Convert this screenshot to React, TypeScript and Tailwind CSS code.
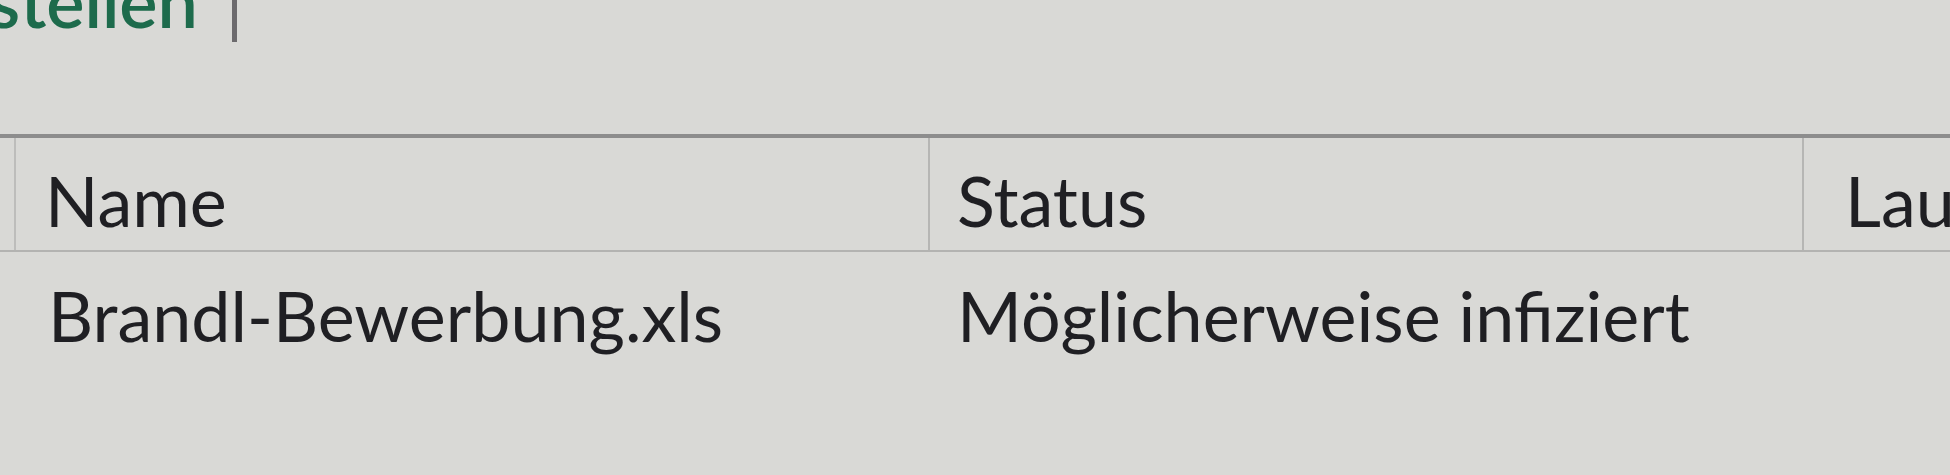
const font = { fontFamily: 'Lato, "Noto Sans", sans-serif' }

const columns = [
  { title: 'Name', value: 'Brandl-Bewerbung.xls', width: 'w-[914px]', pad: 'pl-[29px]', rowPad: 'pl-[34px]' },
  { title: 'Status', value: 'Möglicherweise infiziert', width: 'w-[874px]', pad: 'pl-[27px]', rowPad: 'pl-[29px]' },
  { title: 'Laufwerk', value: '', width: 'flex-1', pad: 'pl-[41px]', rowPad: 'pl-[41px]' },
]

function App() {
  return (
    <div
      className="h-[475px] w-[1950px] overflow-hidden bg-[#d9d9d6] text-[#1f1f23]"
      style={font}
    >
      {/* toolbar text, cut off by the top edge */}
      <div className="flex h-[42px] items-start">
        <div className="-mt-[36px] flex w-[198px] justify-end overflow-hidden whitespace-nowrap text-[72px] leading-none font-semibold text-[#1d6b4c]">
          <span>Einstellen</span>
        </div>
        <div className="ml-[34px] h-[42px] w-[5px] bg-[#6c6a6d]" />
      </div>

      <div className="mt-[92px] border-t-[4px] border-[#8d8d8d]">
        <div className="flex border-b-2 border-[#b3b3b1] pl-[14px]">
          {columns.map((c, i) => (
            <div
              key={c.title}
              className={`${c.width} ${c.pad} flex h-[112px] items-start overflow-hidden border-l-2 pt-[20px] ${
                i === 0 ? 'border-[#bdbdbb]' : 'border-[#b6b6b4]'
              }`}
            >
              <span className="whitespace-nowrap text-[70px] leading-[1.2]">{c.title}</span>
            </div>
          ))}
        </div>

        <div className="flex pl-[14px] pt-[21px]">
          {columns.map((c) => (
            <div key={c.title} className={`${c.width} ${c.rowPad} overflow-hidden`}>
              <span className="whitespace-nowrap text-[70px] leading-[1.2]">{c.value}</span>
            </div>
          ))}
        </div>
      </div>
    </div>
  )
}

export default App
